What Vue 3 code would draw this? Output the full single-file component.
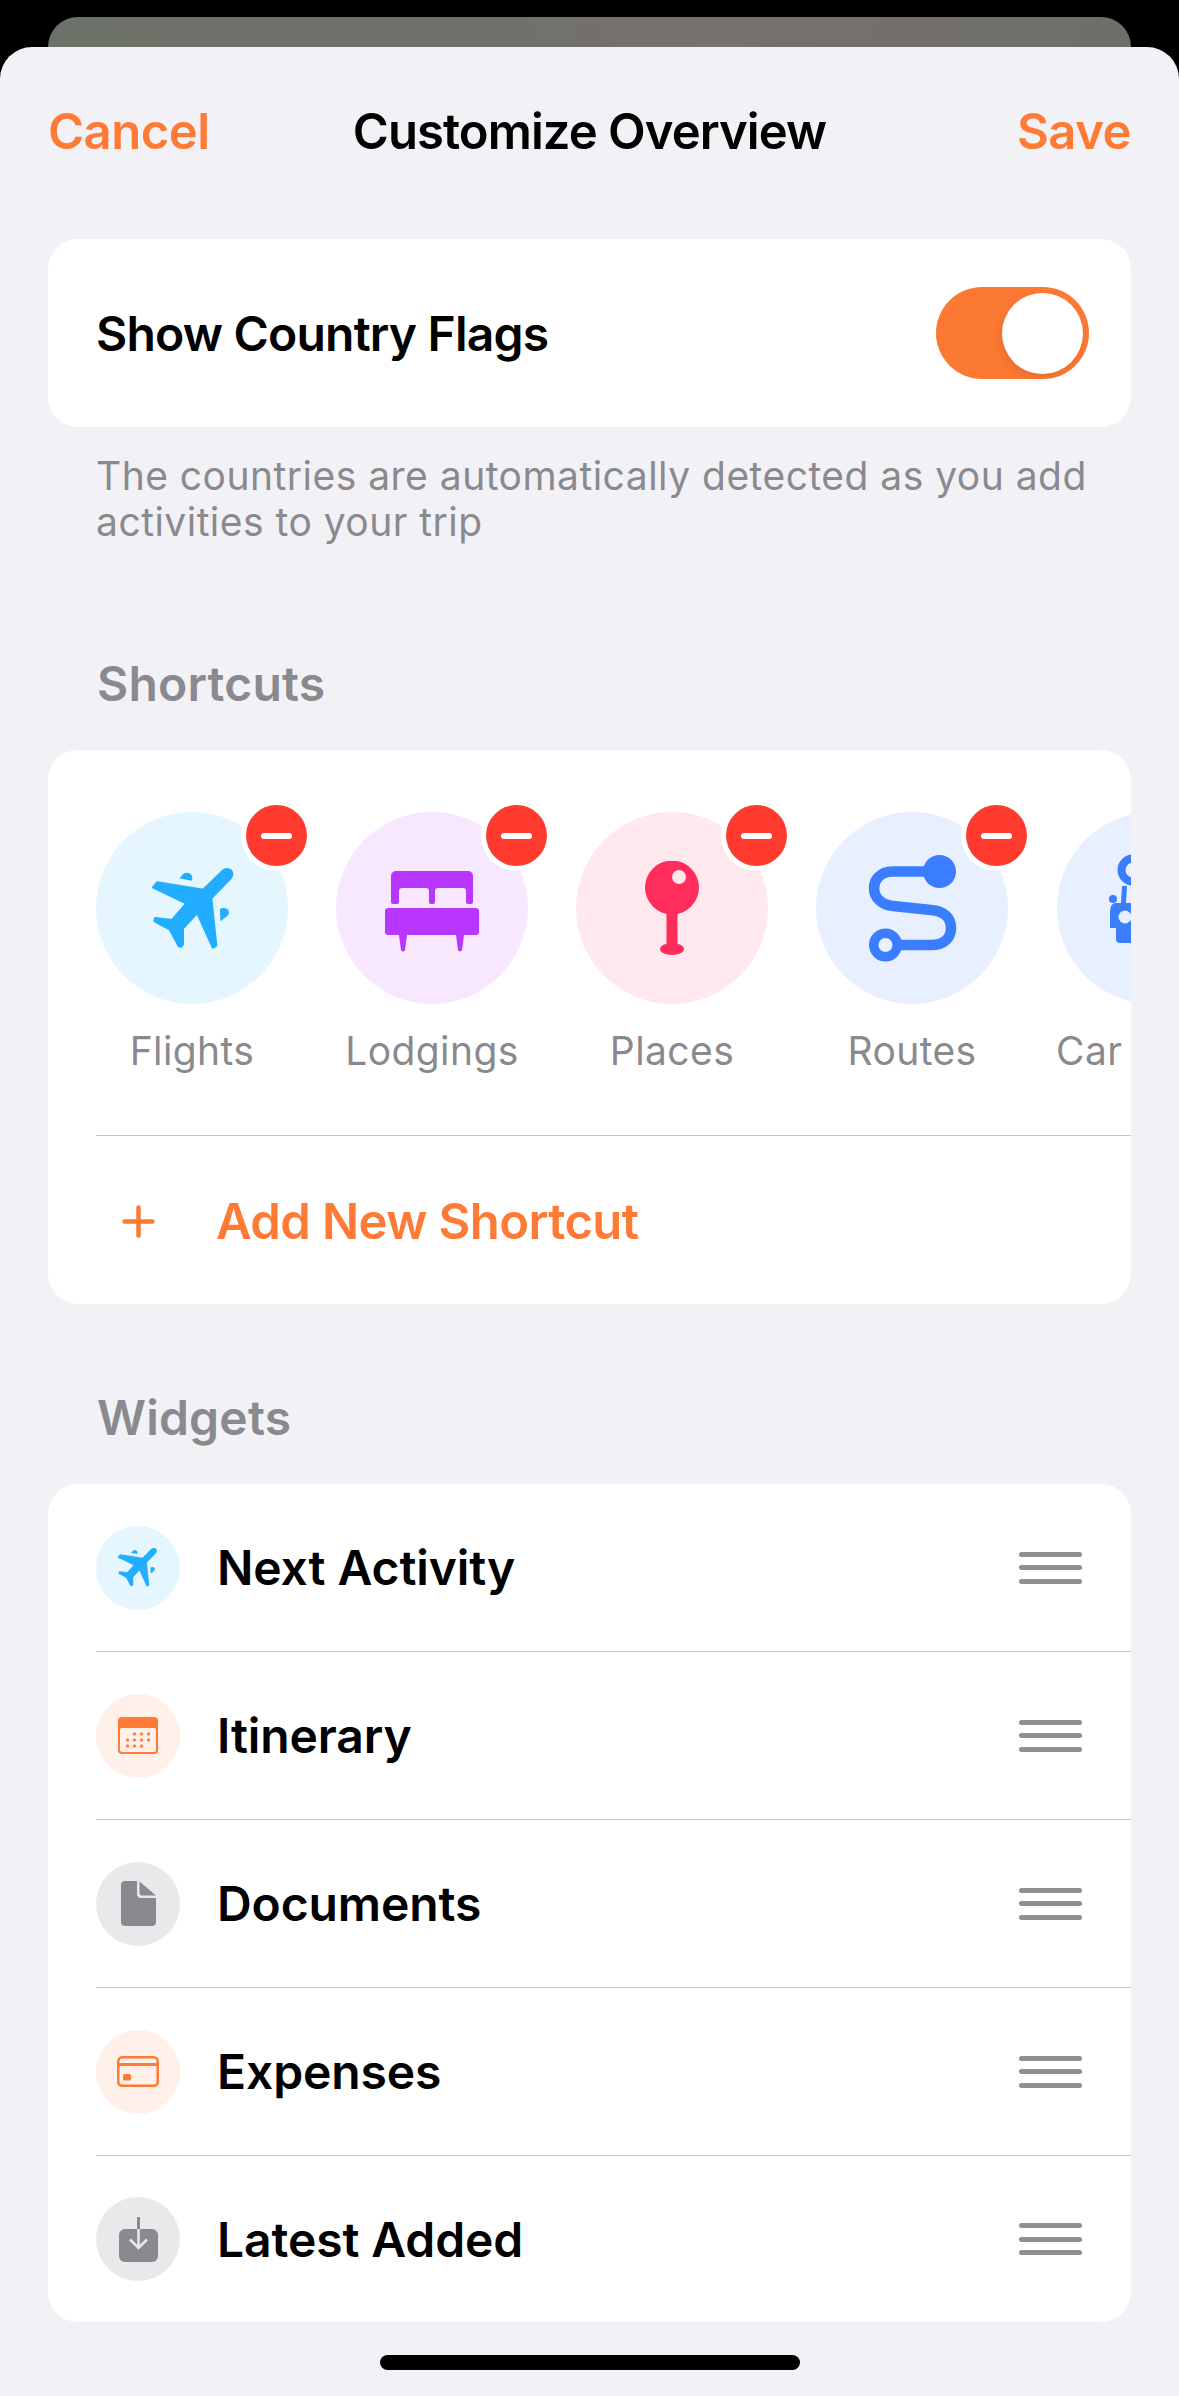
<script setup>
const shortcuts = [
  { name: 'Flights', icon: 'plane', bg: '#e5f6ff', color: '#22adff' },
  { name: 'Lodgings', icon: 'bed', bg: '#f7e8ff', color: '#b936ff' },
  { name: 'Places', icon: 'pin', bg: '#ffe9ee', color: '#ff2d5b' },
  { name: 'Routes', icon: 'route', bg: '#e8f0ff', color: '#3a7dff' },
  { name: 'Car Rental', icon: 'car', bg: '#e8f0ff', color: '#3a7dff', noBadge: true }
]

const widgets = [
  { name: 'Next Activity', icon: 'plane', bg: '#e5f6ff', color: '#22adff' },
  { name: 'Itinerary', icon: 'calendar', bg: '#fff0e9', color: '#ff7a35' },
  { name: 'Documents', icon: 'doc', bg: '#e9e9eb', color: '#8a8a8e' },
  { name: 'Expenses', icon: 'card', bg: '#fff0e9', color: '#ff7a35' },
  { name: 'Latest Added', icon: 'inbox', bg: '#e9e9eb', color: '#8a8a8e' }
]

const calDots = []
for (let r = 0; r < 3; r++) {
  for (let c = 0; c < 4; c++) {
    if ((r === 0 && c === 0) || (r === 2 && c === 3)) continue
    calDots.push({ x: 8 + c * 7, y: 15.5 + r * 6 })
  }
}
</script>

<template>
  <div class="screen">
    <div class="back-card"></div>
    <div class="sheet">
      <header class="nav">
        <span class="nav-btn">Cancel</span>
        <span class="nav-title">Customize Overview</span>
        <span class="nav-btn nav-save">Save</span>
      </header>

      <section class="card flag-card">
        <span class="flag-label">Show Country Flags</span>
        <div class="toggle"><div class="knob"></div></div>
      </section>
      <p class="note">The countries are automatically detected as you add activities to your trip</p>

      <h2 class="section-title shortcuts-title">Shortcuts</h2>
      <section class="card shortcuts-card">
        <div class="shortcut-row">
          <div v-for="s in shortcuts" :key="s.name" class="shortcut">
            <div class="shortcut-circle" :style="{ background: s.bg, color: s.color }">
              <svg v-if="s.icon === 'plane'" class="icon-plane" viewBox="-9 -6 330 300"><use href="#plane-shape" /></svg>
              <svg v-else-if="s.icon === 'bed'" class="icon-bed" viewBox="0 -7 94 88" fill="currentColor">
                <path d="M6 5a5 5 0 0 1 5-5h72a5 5 0 0 1 5 5v26a2 2 0 0 1-2 2h-3a2 2 0 0 1-2-2V20a3 3 0 0 0-3-3H53a3 3 0 0 0-3 3v11a2 2 0 0 1-2 2h-2a2 2 0 0 1-2-2V20a3 3 0 0 0-3-3H17a3 3 0 0 0-3 3v11a2 2 0 0 1-2 2H8a2 2 0 0 1-2-2z" />
                <rect x="0" y="37" width="94" height="27" rx="3" />
                <path d="M14 64h8l-2 15q-2 3-4 0z" />
                <path d="M71 64h8l-2 15q-2 3-4 0z" />
              </svg>
              <svg v-else-if="s.icon === 'pin'" class="icon-pin" viewBox="0 0 54 94" fill="currentColor">
                <circle cx="27" cy="26.500" r="27" />
                <rect x="21.500" y="48" width="11" height="38" />
                <ellipse cx="27" cy="88" rx="12" ry="6" />
                <circle cx="34" cy="16" r="7" :fill="s.bg" />
              </svg>
              <svg v-else-if="s.icon === 'route'" class="icon-route" viewBox="0 0 87 106" fill="none" stroke="currentColor" stroke-width="10.500">
                <path d="M70 16.500H24C10 16.500 5 26 5 33C5 44 14 50 24 51L62 55C74 56 82 62 82 73C82 84 74 90 62 90H16" />
                <circle cx="70.500" cy="16.500" r="16.500" fill="currentColor" stroke="none" />
                <circle cx="16.500" cy="90" r="11.750" stroke-width="9.500" :fill="s.bg" />
              </svg>
              <svg v-else class="icon-car" viewBox="1104 854 96 108" fill="currentColor">
                <circle cx="1132" cy="870" r="11.500" fill="none" stroke="currentColor" stroke-width="8" />
                <circle cx="1112" cy="899" r="4" />
                <path d="M1121 886h5l-1 17h25v25H1109v-16q0-8 5-9h6z" />
                <rect x="1115" y="925" width="30" height="18" rx="4" />
                <circle cx="1124" cy="917" r="6.500" :fill="s.bg" />
              </svg>
              <span v-if="!s.noBadge" class="badge"><i></i></span>
            </div>
            <span class="shortcut-name">{{ s.name }}</span>
          </div>
        </div>
        <div class="add-row">
          <svg class="add-plus" viewBox="0 0 33 33" fill="none" stroke="currentColor" stroke-width="4.500" stroke-linecap="round">
            <path d="M2.500 16.500h28M16.500 2.500v28" />
          </svg>
          <span class="add-label">Add New Shortcut</span>
        </div>
      </section>

      <h2 class="section-title widgets-title">Widgets</h2>
      <section class="card widgets-card">
        <div v-for="w in widgets" :key="w.name" class="widget">
          <div class="widget-circle" :style="{ background: w.bg, color: w.color }">
            <svg v-if="w.icon === 'plane'" class="wicon-plane" viewBox="0 0 330 300"><use href="#plane-shape" /></svg>
            <svg v-else-if="w.icon === 'calendar'" class="wicon-cal" viewBox="0 0 40 37">
              <rect width="40" height="37" rx="4" fill="currentColor" />
              <rect width="36" height="24" x="2" y="11" rx="2" :fill="w.bg" />
              <rect v-for="(d, i) in calDots" :key="i" :x="d.x" :y="d.y" width="3" height="3" rx="1" fill="currentColor" />
            </svg>
            <svg v-else-if="w.icon === 'doc'" class="wicon-doc" viewBox="0 0 35 45" fill="currentColor">
              <path d="M4 0H16V13a4 4 0 0 0 4 4H35V41a4 4 0 0 1-4 4H4a4 4 0 0 1-4-4V4a4 4 0 0 1 4-4z" />
              <path d="M18.500.500 35 14.500H21a2.500 2.500 0 0 1-2.500-2.500z" />
            </svg>
            <svg v-else-if="w.icon === 'card'" class="wicon-card" viewBox="0 0 42 31" fill="none">
              <rect x="1.250" y="1.250" width="39.500" height="28.500" rx="4" stroke="currentColor" stroke-width="2.500" />
              <rect x="1" y="7" width="40" height="3" fill="currentColor" />
              <rect x="6" y="18" width="8" height="6.500" rx="1.500" fill="currentColor" />
            </svg>
            <svg v-else class="wicon-inbox" viewBox="0 0 39 45" fill="none">
              <rect y="12" width="39" height="33" rx="6" fill="currentColor" />
              <path d="M19.500 0v12" stroke="currentColor" stroke-width="3" />
              <path d="M19.500 12v18M11 22.500l8.500 8.500 8.500-8.500" :stroke="w.bg" stroke-width="2.500" />
            </svg>
          </div>
          <span class="widget-name">{{ w.name }}</span>
          <div class="handle"><i></i><i></i><i></i></div>
        </div>
      </section>
    </div>
    <div class="home-bar"></div>

    <svg class="defs" width="0" height="0">
      <defs>
        <g id="plane-shape" fill="currentColor">
          <path stroke="currentColor" stroke-width="8" stroke-linejoin="round" d="M249 33C258 25 272 28 275 37C278 45 274 52 268 58L213 114L228 256L219 262L172 158L128 205L128 252L124 259L117 258L90 208L44 183L46 175L96 181L140 130L40 82L52 68L190 90Z" />
          <path d="M118 55L132 40Q148 34 155 46Q160 55 155 62Z" />
          <path d="M240 147Q255 140 265 150Q270 160 262 168L241 184Z" />
        </g>
      </defs>
    </svg>
  </div>
</template>

<style>
html, body {
  margin: 0;
  background: #000;
}
</style>

<style scoped>
.screen {
  position: relative;
  width: 1179px;
  height: 2396px;
  overflow: hidden;
  background: #000;
  font-family: Inter, "Liberation Sans", sans-serif;
  padding-top: 17px;
  box-sizing: border-box;
}

.back-card {
  height: 30px;
  margin: 0 48px;
  border-radius: 30px 30px 0 0;
  background: linear-gradient(90deg, #6d7268 0%, #70716b 40%, #77706c 62%, #6e6f6a 100%);
}

.sheet {
  height: 2349px;
  box-sizing: border-box;
  padding: 0 48px;
  background: #f2f1f6;
  border-radius: 32px 32px 0 0;
}

.nav {
  display: grid;
  grid-template-columns: 1fr auto 1fr;
  align-items: center;
  height: 168px;
  margin-bottom: 24px;
}

.nav-btn {
  font-size: 49px;
  font-weight: 600;
  color: #ff7a35;
  letter-spacing: -0.5px;
}

.nav-save {
  text-align: right;
}

.nav-title {
  font-size: 49px;
  font-weight: 600;
  color: #000;
  letter-spacing: -0.95px;
}

.card {
  background: #fff;
  border-radius: 30px;
}

.flag-card {
  display: flex;
  justify-content: space-between;
  align-items: center;
  height: 188px;
  padding: 0 42px 0 48px;
}

.flag-label {
  font-size: 48px;
  font-weight: 600;
  color: #000;
  letter-spacing: -0.8px;
}

.toggle {
  position: relative;
  width: 153px;
  height: 92px;
  border-radius: 46px;
  background: #fb7933;
}

.knob {
  position: absolute;
  top: 6px;
  right: 6px;
  width: 81px;
  height: 81px;
  border-radius: 50%;
  background: #fff;
  box-shadow: -2px 4px 10px rgba(0, 0, 0, 0.08);
}

.note {
  margin: 26px 0 0;
  padding: 0 20px 0 48px;
  font-size: 39px;
  line-height: 46px;
  color: #8a8a8e;
  letter-spacing: 0.48px;
}

.section-title {
  margin: 0;
  padding-left: 49px;
  font-size: 48px;
  line-height: 56px;
  font-weight: 600;
  color: #8a8a8e;
  letter-spacing: 0.2px;
}

.shortcuts-title {
  margin-top: 111px;
  margin-bottom: 38px;
}

.widgets-title {
  margin-top: 86px;
  margin-bottom: 38px;
}

.shortcuts-card {
  height: 554px;
  box-sizing: border-box;
  padding-left: 48px;
  overflow: hidden;
}

.shortcut-row {
  display: flex;
  gap: 48px;
  height: 385px;
  padding-top: 62px;
  box-sizing: border-box;
}

.shortcut {
  flex: 0 0 192px;
  display: flex;
  flex-direction: column;
  align-items: center;
}

.shortcut-circle {
  position: relative;
  flex: none;
  width: 192px;
  height: 192px;
  border-radius: 50%;
  display: flex;
  align-items: center;
  justify-content: center;
}

.icon-plane {
  width: 110px;
  height: 100px;
  overflow: visible;
}

.icon-bed {
  width: 94px;
  height: 88px;
}

.icon-pin {
  width: 54px;
  height: 94px;
}

.icon-route {
  width: 87px;
  height: 106px;
  overflow: visible;
}

.icon-car {
  flex: none;
  width: 96px;
  height: 108px;
}

.badge {
  position: absolute;
  top: -7px;
  left: 150px;
  width: 61px;
  height: 61px;
  border-radius: 50%;
  background: #ff3b30;
  box-shadow: 0 0 0 5px #fff;
  display: flex;
  align-items: center;
  justify-content: center;
}

.badge i {
  display: block;
  width: 31px;
  height: 6px;
  border-radius: 3px;
  background: #fff;
}

.shortcut-name {
  margin-top: 22px;
  font-size: 39px;
  line-height: 50px;
  color: #8a8a8e;
  white-space: nowrap;
  letter-spacing: 0.4px;
}

.add-row {
  display: flex;
  align-items: center;
  height: 169px;
  box-sizing: border-box;
  padding-top: 3px;
  border-top: 1px solid #c6c6c8;
  color: #ff7a35;
}

.add-plus {
  flex: none;
  width: 33px;
  height: 33px;
  margin-left: 26px;
  margin-right: 61px;
}

.add-label {
  font-size: 49px;
  font-weight: 600;
  letter-spacing: -0.6px;
}

.widgets-card {
  padding-left: 48px;
}

.widget {
  display: flex;
  align-items: center;
  height: 167px;
  border-bottom: 1px solid #c6c6c8;
}

.widget:last-child {
  height: 166px;
  border-bottom: 0;
}

.widget-circle {
  flex: none;
  width: 84px;
  height: 84px;
  border-radius: 50%;
  display: flex;
  align-items: center;
  justify-content: center;
}

.wicon-plane {
  width: 53px;
  height: 48px;
  overflow: visible;
}

.wicon-cal {
  width: 40px;
  height: 37px;
}

.wicon-doc {
  width: 35px;
  height: 45px;
}

.wicon-card {
  width: 42px;
  height: 31px;
}

.wicon-inbox {
  width: 39px;
  height: 45px;
}

.widget-name {
  margin-left: 37px;
  font-size: 48px;
  font-weight: 600;
  color: #000;
  letter-spacing: -0.1px;
}

.handle {
  margin-left: auto;
  margin-right: 49px;
  display: flex;
  flex-direction: column;
  gap: 8.500px;
}

.handle i {
  display: block;
  width: 63px;
  height: 5px;
  border-radius: 3px;
  background: #8e8e93;
}

.home-bar {
  position: absolute;
  left: 380px;
  bottom: 26px;
  width: 420px;
  height: 15px;
  border-radius: 8px;
  background: #000;
}

.defs {
  position: absolute;
}
</style>
